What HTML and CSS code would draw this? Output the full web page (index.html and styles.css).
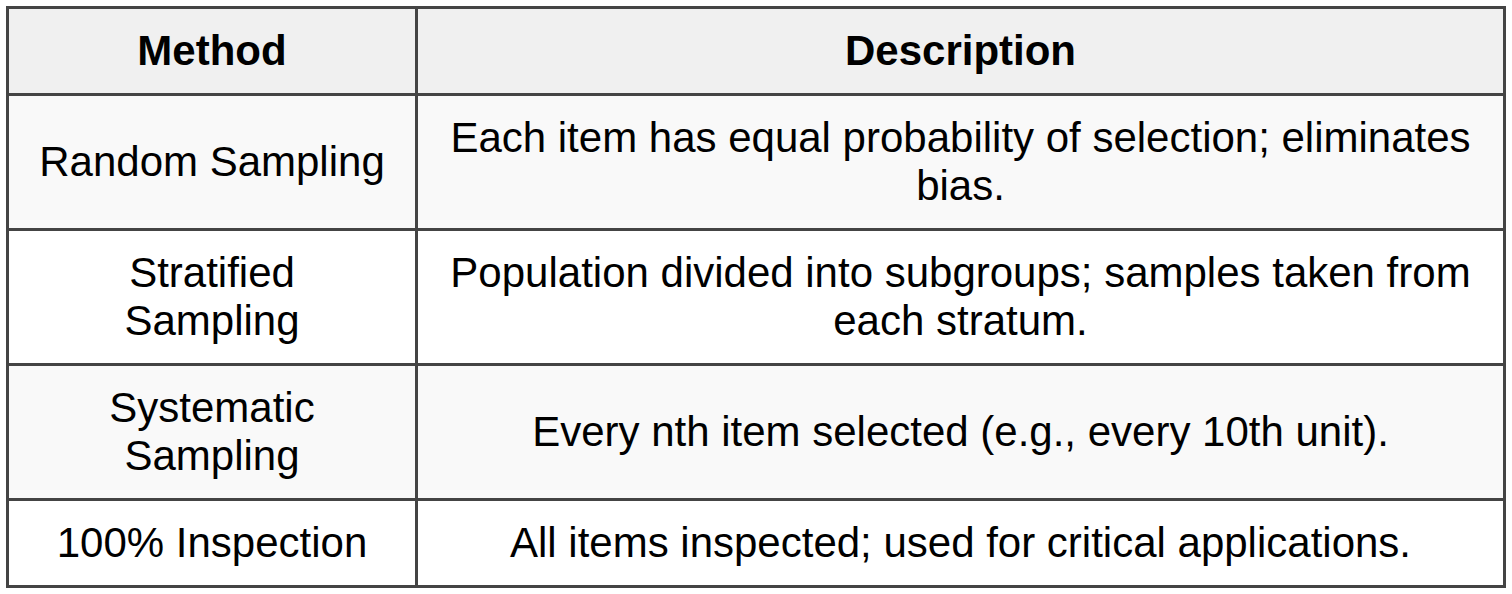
FILE: index.html
```html
<!DOCTYPE html>
<html lang="en">
<head>
<meta charset="utf-8">
<title>Sampling Methods</title>
<link rel="stylesheet" href="styles.css">
</head>
<body>
<table class="methods">
  <colgroup>
    <col class="col-method">
    <col class="col-desc">
  </colgroup>
  <thead>
    <tr>
      <th>Method</th>
      <th>Description</th>
    </tr>
  </thead>
  <tbody>
    <tr>
      <td>Random Sampling</td>
      <td>Each item has equal probability of selection; eliminates bias.</td>
    </tr>
    <tr>
      <td>Stratified Sampling</td>
      <td>Population divided into subgroups; samples taken from each stratum.</td>
    </tr>
    <tr>
      <td>Systematic Sampling</td>
      <td>Every nth item selected (e.g., every 10th unit).</td>
    </tr>
    <tr>
      <td>100% Inspection</td>
      <td>All items inspected; used for critical applications.</td>
    </tr>
  </tbody>
</table>
</body>
</html>
```

FILE: styles.css
```css
html, body {
  background: #ffffff;
}

body {
  margin: 6px;
  font-family: "Liberation Sans", Arial, sans-serif;
  color: #000000;
}

.methods {
  width: 1500px;
  table-layout: fixed;
  border-collapse: separate;
  border-spacing: 0;
  border-left: 3px solid #444444;
  border-top: 3px solid #444444;
  font-size: 42px;
  line-height: 48px;
}

.col-method {
  width: 409px;
}

.methods th,
.methods td {
  padding: 18px 29px;
  border-right: 3px solid #444444;
  border-bottom: 3px solid #444444;
  text-align: center;
  vertical-align: middle;
}

.methods th {
  background: #f0f0f0;
  font-weight: bold;
}

.methods tbody tr:nth-child(odd) td {
  background: #f9f9f9;
}

.methods tbody tr:nth-child(even) td {
  background: #ffffff;
}
```
